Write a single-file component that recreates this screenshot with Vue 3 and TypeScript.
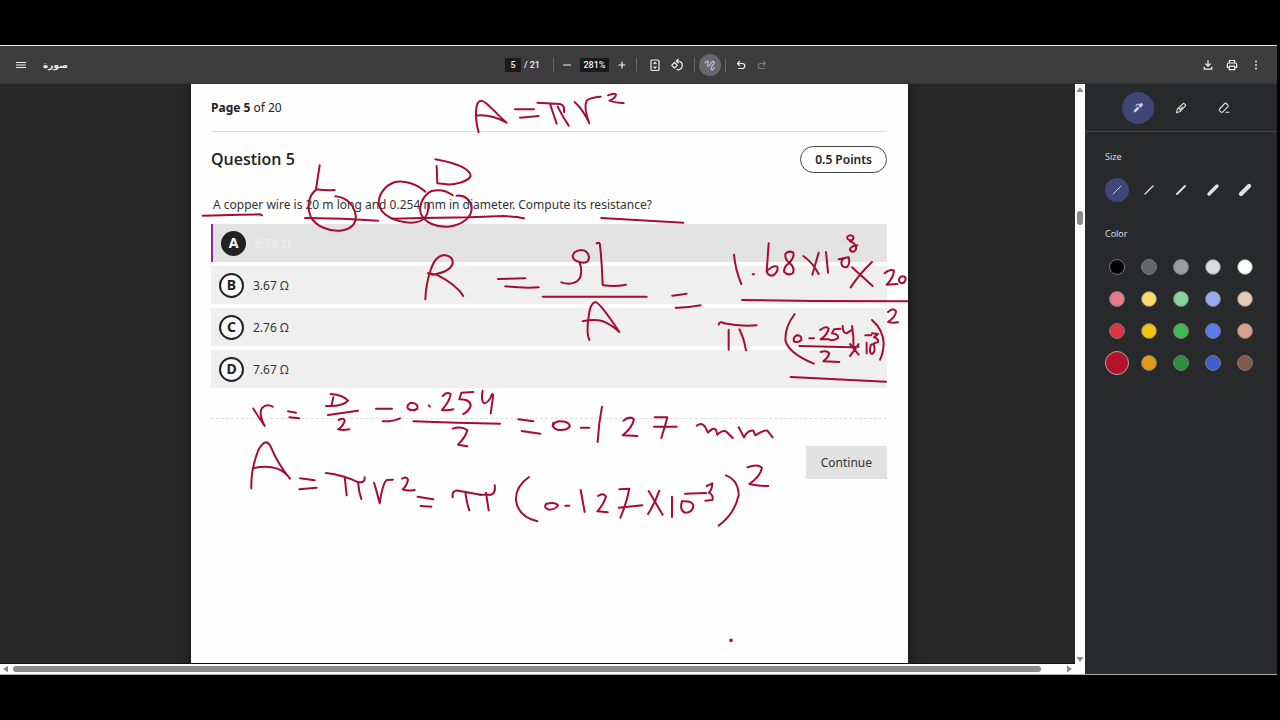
<script setup lang="ts">
import { ref } from 'vue'

interface Choice { key: string; text: string }
interface InkLayer { x: number; y: number; strokes: string[] }

const choices: Choice[] = [
  { key: 'A', text: '6.76 Ω' },
  { key: 'B', text: '3.67 Ω' },
  { key: 'C', text: '2.76 Ω' },
  { key: 'D', text: '7.67 Ω' },
]
const answer = ref('A')

const sizes = [1, 2, 3, 4, 5]
const lineWidths = [1, 1.3, 2, 3.4, 4.2]
const size = ref(1)

const colors = [
  '#000000', '#636668', '#9b9d9e', '#d9dbdc', '#ffffff',
  '#e77c88', '#fbdb6b', '#85d59b', '#98abf1', '#e5cab6',
  '#dc3341', '#f1c40f', '#42b956', '#5a7cec', '#d9a08c',
  '#b3132a', '#e29c18', '#298f3b', '#3d60d0', '#825a4b',
]
const color = ref('#b3132a')
const pageNumber = ref('5')
const zoomLevel = ref('281%')

/* Pen strokes, stored at three units to the pixel */
const ink: InkLayer[] = [
  { x: 190, y: 80, strokes: [
    'M866 157C854 115 854 62 874 62C890 62 915 100 950 128M857 107C890 103 920 112 950 128',
    'M975 88H1032M990 113L1046 108',
    'M389 256L378 328Q410 332 434 330',
    'M380 328C355 345 350 380 362 410C378 440 420 455 450 452C485 448 500 430 497 405C492 375 470 352 436 349',
    'M38 407L150 404L210 403L216 406M345 414L460 416L564 422',
    'M736 238C790 248 840 265 842 288C835 305 790 316 770 313L742 310L740 258',
    'M706 335C680 312 645 300 615 306C580 318 563 350 567 375C575 405 610 425 660 428C695 428 712 415 715 385L715 372',
    'M788 346C770 332 745 328 725 333C700 345 686 375 692 400C705 430 740 442 775 440C820 435 845 410 845 385C843 360 825 345 800 347',
    'M606 416L700 414L840 412L940 408Q980 410 1002 415',
  ] },
  { x: 540, y: 80, strokes: [
    'M-8 68L60 72Q75 76 72 96M30 72L50 131M53 80Q68 110 86 137',
    'M104 66Q130 90 148 130Q130 80 140 62Q150 52 182 50',
    'M204 46Q226 38 228 44Q226 56 208 62Q230 70 251 69',
    'M184 414L430 428',
  ] },
  { x: 190, y: 220, strokes: [
    'M706 238Q708 190 722 150Q735 108 762 105Q790 108 788 130Q782 155 730 164L714 160L740 164Q800 195 820 228',
    'M924 177L1006 175M946 199Q1000 205 1046 202',
  ] },
  { x: 540, y: 220, strokes: [
    'M118 126Q146 134 147 112Q144 90 122 90Q98 94 98 110Q100 122 118 126Q128 150 120 174Q110 190 88 191Q74 191 64 187',
    'M170 70Q180 64 180 76Q186 130 188 195Q220 202 258 194',
    'M8 230H320',
    'M148 360Q138 340 146 290Q150 250 166 246Q180 248 238 336M128 304Q160 296 190 304Q215 314 238 336',
    'M397 227L440 221M407 263Q440 264 482 256',
    'M582 104Q586 150 604 192M638 163H642',
    'M686 70L680 155Q686 170 700 166Q716 154 712 140Q700 134 682 152',
    'M760 98Q745 90 736 102Q734 120 750 130Q766 145 758 160Q742 168 732 155Q732 140 746 130Q764 112 760 98',
    'M790 108Q820 130 836 162M836 98L817 164M858 96L864 158',
    'M896 118L926 112Q932 130 920 142Q904 142 904 128Q906 112 926 112',
    'M936 62Q918 60 922 50Q932 42 940 50Q942 60 930 64Q952 72 948 88Q940 102 930 90Q928 80 952 76',
    'M936 142L998 198M996 126Q960 160 932 202',
    'M1034 160Q1050 145 1062 152Q1060 175 1040 194L1072 192M1080 172Q1092 164 1097 174Q1096 190 1084 190Q1072 184 1080 172',
    'M606 240L820 243L1104 244',
    'M536 314Q540 302 552 310Q600 320 650 316M566 330V389M598 328Q612 355 618 391',
    'M1044 276Q1060 260 1068 274Q1068 290 1044 306Q1060 310 1074 307',
    'M764 282Q735 320 736 360Q745 400 822 431M996 300Q1030 330 1031 370Q1030 400 1020 419',
    'M770 346Q758 352 762 364Q774 370 784 360Q786 346 770 346M808 355H822',
    'M840 330Q860 316 866 326Q862 344 842 358L868 358M902 326L882 328L876 340Q898 343 894 354Q884 362 870 360',
    'M908 318Q908 340 920 340L938 328M936 318Q942 350 940 382',
    'M778 378L930 382L956 380M930 372L956 404M956 372Q945 390 930 408',
    'M980 368V400M992 376Q986 400 996 402Q1008 396 1002 376Q998 370 992 376',
    'M976 346H994M996 340L1014 342L1002 352Q1016 356 1014 366L1002 370',
    'M842 396Q860 390 868 400Q864 414 850 424L898 426',
    'M752 471L1038 485',
  ] },
  { x: 190, y: 380, strokes: [
    'M190 86Q205 110 224 138Q205 100 216 84Q230 70 248 80',
    'M294 94L318 98M298 112L327 115',
    'M422 42Q460 45 474 62Q460 80 408 78M430 52L424 78M414 105L504 92',
    'M446 120Q462 112 464 122Q460 138 444 148Q460 152 478 148',
    'M558 86H606M578 124Q610 125 630 115',
    'M664 68Q648 74 654 86Q668 96 682 86Q686 70 664 68M716 76L720 80',
    'M758 48Q770 34 782 42Q780 62 756 90Q775 92 790 88M850 36L814 38L808 58Q842 58 842 78Q835 95 820 102',
    'M670 124L800 128L930 131',
    'M788 146Q815 138 832 150Q828 170 804 194L832 199',
    'M184 325Q182 270 205 210Q228 170 242 200Q265 255 300 296M188 265Q230 255 262 266Q285 275 300 296',
    'M330 295L374 301M328 328L380 323',
    'M408 279Q460 285 500 305Q525 312 524 292M464 290L470 346M504 305Q506 335 514 357',
    'M552 308Q562 340 569 370Q578 310 590 300L609 299',
    'M636 296Q652 288 654 300Q650 318 638 328Q655 334 674 330',
    'M683 350L730 358M692 378L724 380',
    'M788 352Q785 330 805 332L872 344M826 335Q830 370 838 391',
  ] },
  { x: 480, y: 380, strokes: [
    'M8 32Q2 60 12 70Q28 68 36 42M40 44L32 100',
    'M0 344H34Q48 336 44 316M18 338L26 391',
    'M115 118L160 124M125 153L181 161',
    'M220 128Q214 145 235 150Q262 152 270 138Q265 124 240 124Q225 124 218 138M302 143H328M366 80Q356 130 353 186',
    'M430 122Q450 106 462 118Q456 145 428 166L472 168',
    'M524 112H562Q555 140 544 174M522 140H590',
    'M650 137Q665 125 675 140L684 158Q700 140 708 150L712 164Q730 148 740 156L758 174',
    'M776 142L792 172Q805 148 820 152L826 166Q850 150 862 152L878 172',
    'M147 291Q105 320 108 362Q115 410 172 424',
    'M198 372Q190 385 208 389Q228 388 234 376Q225 364 198 372M256 377H268M302 330L314 396',
    'M354 348Q370 336 378 350Q370 375 352 394L383 397',
    'M418 328L448 326Q440 370 421 413M416 383L487 376',
    'M506 333L548 404M538 332Q525 370 504 402M576 350V411',
    'M606 364Q598 392 615 398Q640 398 640 375Q635 362 606 364M615 341L678 339',
    'M680 318L697 310Q696 330 686 338Q702 345 697 360L676 362',
    'M738 286Q775 300 776 345Q765 400 716 437',
    'M802 262Q835 250 846 264Q840 290 808 312Q835 318 865 318',
    'M751 779h4v4h-4z',
  ] },
]
</script>

<template>
  <div class="screen">
    <div class="window">
      <header class="toolbar">
        <div class="start">
          <button class="icon" aria-label="Menu">
            <svg width="14" height="14" viewBox="0 0 14 14"><path d="M2.500 4.500h9M2.500 7h9M2.500 9.500h9" /></svg>
          </button>
          <span class="doc" lang="ar" dir="rtl">صورة</span>
        </div>
        <div class="middle">
          <input v-model="pageNumber" class="field page" aria-label="Page number">
          <span class="total">/ 21</span>
          <i class="sep" />
          <button class="icon" aria-label="Zoom out">
            <svg width="14" height="14" viewBox="0 0 14 14"><path d="M3.500 7h7" /></svg>
          </button>
          <input v-model="zoomLevel" class="field zoom" aria-label="Zoom level">
          <button class="icon" aria-label="Zoom in">
            <svg width="14" height="14" viewBox="0 0 14 14"><path d="M4 7h6M7 4v6" /></svg>
          </button>
          <i class="sep near" />
          <button class="icon fit" aria-label="Fit to page">
            <svg width="14" height="14" viewBox="0 0 14 14"><rect x="3" y="2" width="8" height="10.500" rx="1" /><path d="M6 5.500 7 4.500l1 1M6 9l1 1 1-1" /></svg>
          </button>
          <button class="icon rotate" aria-label="Rotate">
            <svg width="14" height="14" viewBox="0 0 14 14"><path d="m4.500 4.500 2.800 2.800-2.800 2.800-2.800-2.800zM6.500 3h1.500a4.400 4.400 0 1 1-1 8.700M8.200 1.300 6.300 3l1.900 1.800" /></svg>
          </button>
          <i class="sep" />
          <button class="icon draw" aria-label="Draw" aria-pressed="true">
            <svg width="14" height="14" viewBox="0 0 14 14"><path d="M2 5C3 3.300 5 2.600 5.400 3.900S3.600 6.800 4.500 7.700s2.400-.2 3-1.600S9.300 3 10.500 3.600s.3 2.500-1 4-2.300 3.700-1 4.200 3-1 2.500-2.300" /></svg>
          </button>
          <i class="sep" />
          <button class="icon undo" aria-label="Undo">
            <svg width="14" height="14" viewBox="0 0 14 14"><path d="M5.500 3.500 3.500 5.500l2 2M3.500 5.500h4.800a2.500 2.500 0 0 1 0 5H4.500" /></svg>
          </button>
          <button class="icon redo" aria-label="Redo" disabled>
            <svg width="14" height="14" viewBox="0 0 14 14"><path d="m8.500 3.500 2 2-2 2M10.500 5.500H5.700a2.500 2.500 0 0 0 0 5h3.800" /></svg>
          </button>
        </div>
        <div class="end">
          <button class="icon" aria-label="Download">
            <svg width="14" height="14" viewBox="0 0 14 14"><path d="M7 2.500v5.700M4.800 6 7 8.200 9.200 6M3.200 9.200v2h7.600v-2" /></svg>
          </button>
          <button class="icon" aria-label="Print">
            <svg width="14" height="14" viewBox="0 0 14 14"><path d="M4.300 5V2.500h5.400V5M4 9.500H2.300V6.400Q2.300 5 3.700 5h6.600q1.400 0 1.400 1.400v3.100H10M4.300 8.200h5.400v3.500H4.300z" /></svg>
          </button>
          <button class="icon" aria-label="More">
            <svg width="14" height="14" viewBox="0 0 14 14"><path class="dots" d="M7 3.500h.01M7 7h.01M7 10.500h.01" /></svg>
          </button>
        </div>
      </header>

      <div class="body">
        <div class="reader">
          <div class="stage">
            <main class="sheet">
              <p class="progress"><b>Page 5</b> of 20</p>
              <div class="heading">
                <h1>Question 5</h1>
                <span class="points">0.5 Points</span>
              </div>
              <p id="question" class="question">A copper wire is 20 m long and 0.254 mm in diameter. Compute its resistance?</p>
              <div class="choices" role="radiogroup" aria-labelledby="question">
                <label v-for="c in choices" :key="c.key" class="choice" :class="{ chosen: answer === c.key }">
                  <input v-model="answer" class="native" type="radio" name="answer" :value="c.key">
                  <span class="letter">{{ c.key }}</span>
                  <span class="value">{{ c.text }}</span>
                </label>
              </div>
              <div class="actions"><button class="continue">Continue</button></div>
              <svg class="ink" viewBox="191 84 717 580" aria-hidden="true">
                <g v-for="(layer, i) in ink" :key="i" :transform="`translate(${layer.x} ${layer.y}) scale(0.33333)`">
                  <path v-for="(d, n) in layer.strokes" :key="n" :d="d" />
                </g>
              </svg>
            </main>
          </div>
          <div class="vbar">
            <svg width="8" height="6" viewBox="0 0 8 6"><path d="M4 0 7.500 5h-7z" /></svg>
            <div class="vtrack"><div class="vthumb" /></div>
            <svg width="8" height="6" viewBox="0 0 8 6"><path d="M4 6 .5 1h7z" /></svg>
          </div>
          <div class="hbar">
            <svg width="6" height="8" viewBox="0 0 6 8"><path d="M0 4 5 .8v6.400z" /></svg>
            <div class="htrack"><div class="hthumb" /></div>
            <svg width="6" height="8" viewBox="0 0 6 8"><path d="M6 4 1 .5v7z" /></svg>
          </div>
        </div>

        <aside class="panel">
          <div class="tools">
            <button class="tool active" aria-label="Pen" aria-pressed="true">
              <svg width="14" height="14" viewBox="0 0 14 14"><path class="solid" d="m2.500 11.500.5-2.300 3.600-3.700 1.900 1.900-3.700 3.700zM7.300 4.800l1-1L6.900 3.500 5 5.200l-.8-.8L6.500 2.400l2.400.5.6-.6q.8-.7 1.500 0l.7.8q.7.800 0 1.500L9.300 6.900z" /></svg>
            </button>
            <button class="tool" aria-label="Highlighter">
              <svg width="14" height="14" viewBox="0 0 14 14"><path d="m2.500 11.700 1-3.700L8.800 2.800q.8-.8 1.600 0l.8.800q.8.800 0 1.600L6 10.500zM5 7l2 2M6 9l2.500-3" /></svg>
            </button>
            <button class="tool" aria-label="Eraser">
              <svg width="14" height="14" viewBox="0 0 14 14"><path d="M2.500 8 7.700 2.500q.8-.7 1.600 0l1.600 1.600q.7.800 0 1.600L5.700 11.200H4L2.500 9.700q-.7-.8 0-1.700M9 11.200h3" /></svg>
            </button>
          </div>
          <fieldset class="group">
            <legend>Size</legend>
            <div class="swatches">
              <label v-for="s in sizes" :key="s" class="cell" :class="{ active: size === s }">
                <input v-model="size" class="native" type="radio" name="size" :value="s" :aria-label="`Size ${s}`">
                <svg width="14" height="14" viewBox="0 0 14 14"><path d="m3 11 8-8" :stroke-width="lineWidths[s - 1]" /></svg>
              </label>
            </div>
          </fieldset>
          <fieldset class="group">
            <legend>Color</legend>
            <div class="swatches">
              <label v-for="c in colors" :key="c" class="cell">
                <input v-model="color" class="dot" type="radio" name="color" :value="c" :aria-label="c" :style="{ background: c }">
              </label>
            </div>
          </fieldset>
        </aside>
      </div>
    </div>
  </div>
</template>

<style>
body { margin: 0; background: #000; }
</style>

<style scoped>
* { box-sizing: border-box; }
button, input { font: inherit; color: inherit; margin: 0; padding: 0; border: 0; background: none; }
svg { display: block; fill: none; stroke: currentColor; stroke-width: 1.200; stroke-linecap: round; stroke-linejoin: round; }
.screen { min-height: 100vh; display: flex; padding: 45px 3px 45px 0; background: #000; font-family: "Open Sans", "Noto Sans", sans-serif; }
.window { flex: 1; min-width: 0; display: flex; flex-direction: column; border-top: 1px solid #e8e8e8; border-bottom: 1px solid #aaa; background: #282828; }

.toolbar { height: 38px; flex: none; display: grid; grid-template-columns: 1fr auto 1fr; align-items: center; background: #3c3c3c; color: #f1f1f1; border-bottom: 1px solid #333; }
.start { display: flex; align-items: center; gap: 15px; padding-left: 14px; }
.doc { font: bold 9px "DejaVu Sans", sans-serif; }
.middle { display: flex; align-items: center; margin-right: 3px; font: 500 9px Roboto, sans-serif; }
.end { display: flex; justify-content: flex-end; gap: 10px; padding-right: 14px; }
.icon { width: 14px; height: 14px; }
.dots { stroke-width: 1.800; }
.field { height: 14px; background: #1b1b1b; text-align: center; }
.page { width: 16px; }
.zoom { width: 29px; margin: 0 6px; }
.total { margin-left: 3px; }
.sep { width: 1px; height: 14px; background: #666; margin: 0 6px 0 13px; }
.near { margin-left: 7px; }
.fit { margin-left: 5px; margin-right: 8px; }
.rotate + .sep { margin: 0 4px 0 10px; }
.draw { width: 22px; height: 22px; border-radius: 50%; background: #68686c; color: #b9c3ef; display: grid; place-items: center; }
.draw + .sep { margin: 0 8px 0 4px; }
.redo { margin-left: 7px; color: #777; }

.body { flex: 1; display: flex; min-height: 0; }
.reader { flex: 1; min-width: 0; display: grid; grid-template-columns: 1fr 10px; grid-template-rows: 1fr 10px; }
.stage { display: flex; justify-content: center; padding-left: 24px; background: #282828; overflow: hidden; border-bottom: 1px solid #111; }
.sheet { position: relative; width: 100%; max-width: 717px; padding: 0 21px 0 20px; background: #fefefe; color: #222; box-shadow: 0 0 10px #111; font-family: "Noto Sans", sans-serif; font-size: 12px; }
.progress { margin: 0; height: 48px; line-height: 47px; border-bottom: 1px solid #ddd; }
.heading { display: flex; align-items: center; justify-content: space-between; height: 54px; }
h1 { margin: 0; font-family: "Open Sans", sans-serif; font-size: 16px; font-weight: 600; }
.points { height: 27px; line-height: 25px; padding: 0 14px; border: 1px solid #444; border-radius: 14px; font-weight: 600; }
.question { margin: 0; padding: 0 2px; height: 38px; line-height: 38px; color: #333; }
.choices { display: grid; gap: 4px; }
.choice { position: relative; display: flex; align-items: center; gap: 9px; height: 38px; padding-left: 8px; background: #efefef; color: #333; }
.letter { width: 25px; height: 25px; display: grid; place-items: center; border: 2px solid #222; border-radius: 50%; background: #fafafa; color: #222; font-size: 14px; font-weight: 700; line-height: 20px; }
.chosen { border-left: 2px solid #8e24aa; background: #e3e3e3; color: #eee; }
.chosen .letter { background: #222; color: #fff; }
.native { position: absolute; opacity: 0; width: 14px; height: 14px; }
.actions { display: flex; justify-content: flex-end; margin-top: 30px; padding-top: 27px; border-top: 1px dashed #ddd; }
.continue { height: 33px; padding: 0 15px; background: #e2e2e2; color: #333; }
.ink { position: absolute; top: 0; left: 0; width: 100%; pointer-events: none; stroke: #a50d31; stroke-width: 6; }

.vbar, .hbar { background: #fcfcfc; display: flex; align-items: center; }
.vbar svg, .hbar svg { flex: none; fill: #8a8a8a; stroke: none; }
.vbar { grid-row: 1 / 3; grid-column: 2; flex-direction: column; padding: 3px 0 12px; }
.vtrack { flex: 1; padding-top: 118px; }
.vthumb { width: 6px; height: 14px; border-radius: 3px; background: #8a8a8a; }
.hbar { grid-row: 2; grid-column: 1; gap: 4px; padding: 0 3px; }
.htrack { flex: 1; }
.hthumb { width: 98%; height: 6px; border-radius: 3px; background: #8a8a8a; }

.panel { width: 192px; flex: none; background: #27292a; color: #e0e0e0; font-size: 9px; }
.tools { display: flex; gap: 11px; height: 48px; padding: 0 37px; align-items: center; border-bottom: 1px solid #424547; }
.tool { width: 32px; height: 32px; border-radius: 50%; display: grid; place-items: center; }
.tool svg { stroke-width: 1.100; }
.active { background: #3f4778; color: #c3cdf7; }
.solid { fill: currentColor; stroke: none; }
.group { margin: 0; border: 0; padding: 18px 16px 0 20px; }
legend { float: left; width: 100%; padding: 0; line-height: 14px; margin-bottom: 14px; }
.group + .group { padding-top: 25px; }
.swatches { clear: both; display: grid; grid-template-columns: repeat(5, 24px); gap: 8px; }
.cell { position: relative; width: 24px; height: 24px; border-radius: 50%; display: grid; place-items: center; }
.dot { appearance: none; width: 16px; height: 16px; border: 1px solid #777; border-radius: 50%; }
.dot:checked { width: 24px; height: 24px; border-color: #aaa; }
</style>
